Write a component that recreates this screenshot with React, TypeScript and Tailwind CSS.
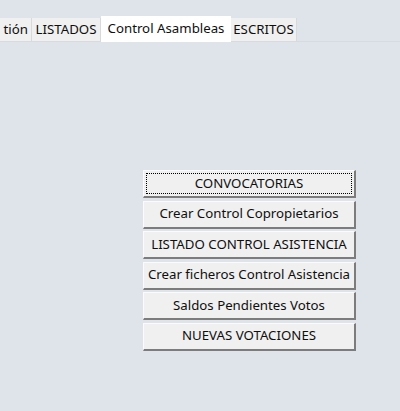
import React from "react";

const tabs = [
  { label: "tión", active: false, w: "w-[32px]", cut: true },
  { label: "LISTADOS", active: false, w: "w-[69px]" },
  { label: "Control Asambleas", active: true, w: "w-[130px]" },
  { label: "ESCRITOS", active: false, w: "w-[66px]" },
];

const buttons = [
  "CONVOCATORIAS",
  "Crear Control Copropietarios",
  "LISTADO CONTROL ASISTENCIA",
  "Crear ficheros Control Asistencia",
  "Saldos Pendientes Votos",
  "NUEVAS VOTACIONES",
];

export default function App() {
  return (
    <div
      className="w-[400px] h-[411px] bg-[#dfe3ea] overflow-hidden text-[#0f0f0f]"
      style={{ fontFamily: '"Noto Sans", "Open Sans", sans-serif' }}
    >
      {/* tab strip */}
      <div className="flex items-end h-[42px] border-b border-[#d7dbe0]">
        {tabs.map((t) =>
          t.active ? (
            <div
              key={t.label}
              className={`${t.w} h-[26px] bg-white flex items-center justify-center text-[13.25px] -mb-px`}
            >
              {t.label}
            </div>
          ) : (
            <div
              key={t.label}
              className={`${t.w} h-[23px] bg-[#f0f0f0] border-r border-[#d9d9d9] flex items-center whitespace-nowrap text-[13.25px] ${
                t.cut ? "justify-end pr-[3px]" : "justify-center"
              }`}
            >
              {t.label}
            </div>
          )
        )}
      </div>

      {/* command buttons */}
      <div className="flex flex-col gap-[2.5px] w-[213px] ml-[143px] mt-[128px]">
        {buttons.map((b, i) => (
          <div
            key={b}
            className="h-[28px] bg-[#f0f0f0] border-t border-l border-[#fbfbfb] border-r-2 border-b-2 border-r-[#7c7c7c] border-b-[#7c7c7c] p-[2px]"
          >
            <div
              className={`h-full flex items-center justify-center whitespace-nowrap text-[13.25px] ${
                i === 0 ? "border border-dotted border-black" : ""
              }`}
            >
              {b}
            </div>
          </div>
        ))}
      </div>
    </div>
  );
}
